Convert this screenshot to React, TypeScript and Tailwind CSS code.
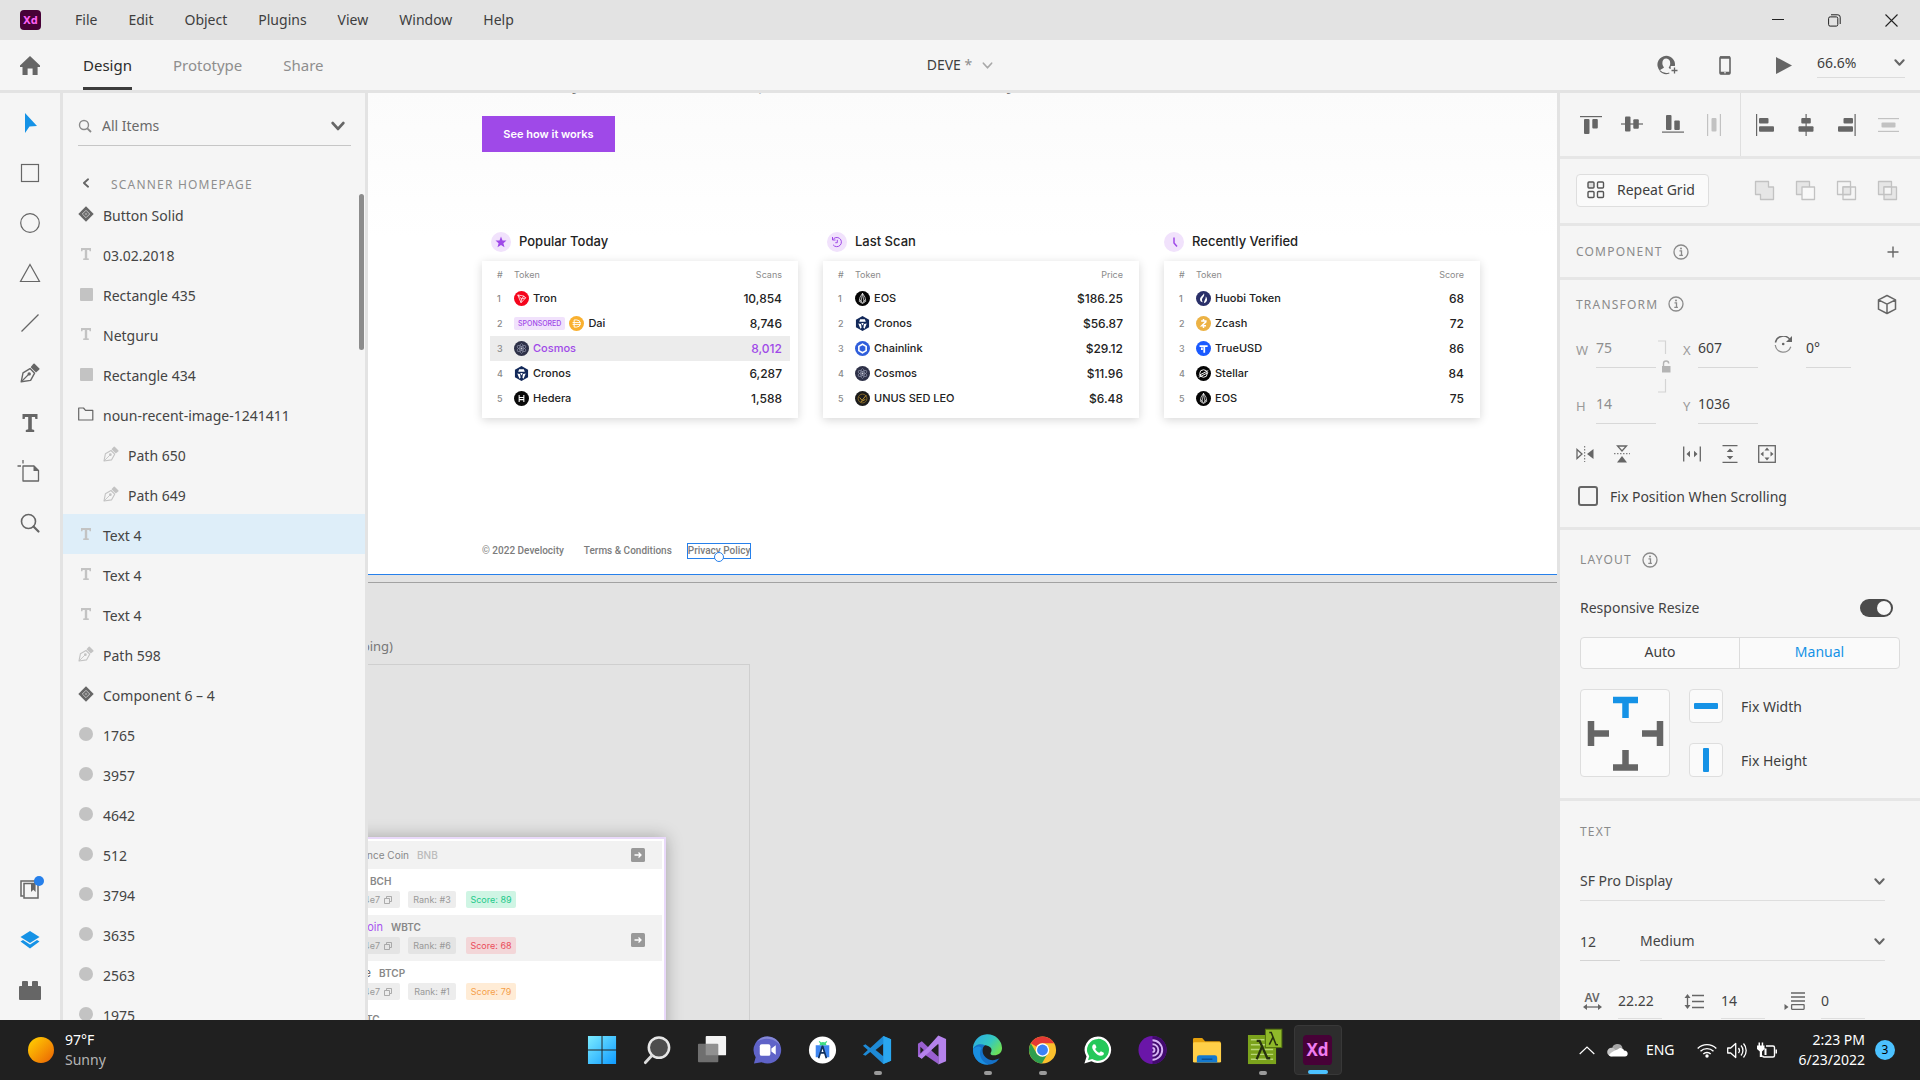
import React from "react";

type IconProps = { children: React.ReactNode; w?: number; h?: number; className?: string; box?: string };

function Icon({ children, w = 22, h = 22, className = "", box }: IconProps) {
  return (
    <svg width={w} height={h} viewBox={box ?? `0 0 ${w} ${h}`} fill="none" className={`shrink-0 ${className}`} aria-hidden="true">
      {children}
    </svg>
  );
}

const G = "#666666";

/* ---------- shared glyphs ---------- */

function Chevron({ w = 12, color = G, sw = 2.2 }: { w?: number; color?: string; sw?: number }) {
  return (
    <Icon w={w} h={w} box="0 0 12 12">
      <path d="M1.5 3.5 6 8.5l4.5-5" stroke={color} strokeWidth={sw} strokeLinejoin="round" strokeLinecap="round" />
    </Icon>
  );
}

function PenGlyph({ size = 18, color = G }: { size?: number; color?: string }) {
  return (
    <Icon w={size} h={size} box="0 0 20 20">
      <path d="M1.2 18.8 3 9.8l7-4.2 4.6 4.6-4 7.2Z" stroke={color} strokeWidth="1.4" strokeLinejoin="round" />
      <path d="m1.5 18.5 7-7" stroke={color} strokeWidth="1.1" />
      <circle cx="9.2" cy="10.9" r="1.7" fill={color} />
      <path d="m10.6 4.2 2.8-3.4 1-.2 5 5v1l-3.4 2.8Z" fill={color} />
    </Icon>
  );
}

function TextGlyph({ size = 16, color = G }: { size?: number; color?: string }) {
  return (
    <Icon w={size} h={size} box="0 0 16 18">
      <path d="M.5 0h15v5h-2.2L13 2.9H9.8v12.4l2.4.6V18H3.8v-2.1l2.4-.6V2.9H3L2.7 5H.5Z" fill={color} />
    </Icon>
  );
}

function InfoGlyph() {
  return (
    <Icon w={16} h={16}>
      <circle cx="8" cy="8" r="7" stroke="#8a8a8a" strokeWidth="1.3" />
      <path d="M6.5 6.8h2V11M6.3 11.3h3.6" stroke="#8a8a8a" strokeWidth="1.3" />
      <circle cx="8" cy="4.6" r="1" fill="#8a8a8a" />
    </Icon>
  );
}

/* ---------- title bar and toolbar ---------- */

function TitleBar() {
  const menus = ["File", "Edit", "Object", "Plugins", "View", "Window", "Help"];
  return (
    <header className="flex h-10 shrink-0 items-center bg-[#e3e3e3] pl-5 text-sm text-[#3e3e3e]">
      <span className="flex h-5 w-[21px] items-center justify-center rounded bg-[#470137] text-[11px] font-bold text-[#ff61f6]">Xd</span>
      <nav className="ml-[34px] flex gap-[31px]">
        {menus.map((m) => (
          <button key={m} type="button">{m}</button>
        ))}
      </nav>
      <div className="ml-auto flex">
        <button type="button" aria-label="Minimize" className="flex h-10 w-[57px] items-center justify-center">
          <Icon w={12} h={12}><path d="M0 5.5h12" stroke="#222" /></Icon>
        </button>
        <button type="button" aria-label="Restore" className="flex h-10 w-[57px] items-center justify-center">
          <Icon w={13} h={13}>
            <rect x=".6" y="2.9" width="9.2" height="9.2" rx="1.5" stroke="#222" />
            <path d="M3 .8h6.8a2.4 2.4 0 0 1 2.4 2.4V10" stroke="#222" />
          </Icon>
        </button>
        <button type="button" aria-label="Close" className="flex h-10 w-[57px] items-center justify-center">
          <Icon w={13} h={13}><path d="m.5.5 12 12m0-12-12 12" stroke="#222" strokeWidth="1.1" /></Icon>
        </button>
      </div>
    </header>
  );
}

function Toolbar() {
  return (
    <div className="grid h-[53px] shrink-0 grid-cols-[1fr_auto_1fr] items-stretch border-b-[3px] border-[#e3e3e3] bg-[#f5f5f5]">
      <div className="flex items-stretch pl-5">
        <button type="button" aria-label="Home">
          <Icon w={20} h={19}><path d="M10 0 20 9.6V11h-2.4v8h-5v-6.4H7.6V19H2.5v-8H0V9.6Z" fill={G} /></Icon>
        </button>
        <div className="ml-[43px] flex gap-[41px] text-[15px]">
          <button type="button" className="border-b-[3px] border-[#3c3c3c] pt-1 text-[#2c2c2c]">Design</button>
          <button type="button" className="border-b-[3px] border-transparent pt-1 text-[#8e8e8e]">Prototype</button>
          <button type="button" className="border-b-[3px] border-transparent pt-1 text-[#8e8e8e]">Share</button>
        </div>
      </div>
      <button type="button" className="flex items-center gap-2.5 text-sm text-[#3e3e3e]">
        <span>DEVE <span className="text-[#8e8e8e]">*</span></span>
        <Chevron w={11} color="#a8a8a8" sw={1.8} />
      </button>
      <div className="flex items-center justify-end pr-[15px]">
        <button type="button" aria-label="Invite" className="mr-[41px]">
          <Icon w={21} h={20}>
            <path d="M17.9 11A8.8 8.8 0 1 0 2.7 15.5C4 13.7 6.7 13.3 7 12.4c-2.8-3-2-8.8 2.3-8.8s5 5.8 2.4 8.8c0 .8 1 1.2 2 1.5V11Z" fill={G} />
            <path d="M2.8 15.5a8.8 8.8 0 0 0 9.5 2.6" stroke={G} strokeWidth="1.1" />
            <path d="M17.5 12.5v6M14.5 15.5h6" stroke={G} strokeWidth="1.3" />
          </Icon>
        </button>
        <button type="button" aria-label="Device preview" className="mr-[45px]">
          <Icon w={12} h={19}>
            <rect x="1" y="1" width="10" height="17" rx="1" stroke={G} strokeWidth="1.6" />
            <path d="M1 1.5h10M1 17h10" stroke={G} strokeWidth="2.6" />
            <circle cx="6" cy="16.8" r=".8" fill="#f5f5f5" />
          </Icon>
        </button>
        <button type="button" aria-label="Play" className="mr-[25px]">
          <Icon w={16} h={17}><path d="M0 0v17l16-8.5Z" fill={G} /></Icon>
        </button>
        <label className="relative flex w-[88px] items-center border-b border-[#dcdcdc] pb-1">
          <select aria-label="Zoom" className="w-full appearance-none bg-transparent text-sm text-[#3e3e3e]"><option>66.6%</option></select>
          <span className="pointer-events-none absolute right-0"><Chevron w={11} /></span>
        </label>
      </div>
    </div>
  );
}

/* ---------- left tool strip ---------- */

function ToolStrip() {
  const tools: { name: string; icon: React.ReactNode }[] = [
    { name: "Select", icon: <Icon><path d="M6 1v20l4.5-6.5 7.5-.6Z" fill="#1592e6" /></Icon> },
    { name: "Rectangle", icon: <Icon><rect x="2.5" y="2.5" width="17" height="17" stroke={G} strokeWidth="1.2" /></Icon> },
    { name: "Ellipse", icon: <Icon><circle cx="11" cy="11" r="9.3" stroke={G} strokeWidth="1.2" /></Icon> },
    { name: "Polygon", icon: <Icon><path d="M11 2.5 20.5 19.5h-19Z" stroke={G} strokeWidth="1.2" /></Icon> },
    { name: "Line", icon: <Icon><path d="M2.5 19.5 19.5 2.5" stroke={G} strokeWidth="1.2" /></Icon> },
    { name: "Pen", icon: <PenGlyph size={20} /> },
    { name: "Text", icon: <TextGlyph size={18} /> },
    {
      name: "Artboard",
      icon: (
        <Icon className="overflow-visible">
          <path d="M4 4h11l4.5 4.5V19H4Z" stroke={G} strokeWidth="1.3" strokeLinejoin="round" />
          <path d="M14.5 3.5V9H20Z" fill={G} />
          <path d="M4-2v3.5M-1.5 4h3.5" stroke={G} strokeWidth="1.3" />
        </Icon>
      ),
    },
    {
      name: "Zoom",
      icon: (
        <Icon>
          <circle cx="9.5" cy="9.5" r="7" stroke={G} strokeWidth="1.6" />
          <path d="m14.5 14.5 5 5" stroke={G} strokeWidth="2.2" strokeLinecap="round" />
        </Icon>
      ),
    },
  ];
  return (
    <aside className="flex w-[63px] shrink-0 flex-col items-center border-r-[3px] border-[#e3e3e3] bg-[#f5f5f5] pt-[5px]">
      {tools.map((t) => (
        <button key={t.name} type="button" aria-label={t.name} className="flex h-[50px] w-full items-center justify-center">{t.icon}</button>
      ))}
      <div className="mt-auto w-full pb-[5px]">
        <button type="button" aria-label="Libraries" className="relative flex h-[50px] w-full items-center justify-center">
          <Icon w={20} h={20}>
            <path d="M3.5 16H1V1h14v2" stroke={G} strokeWidth="1.5" />
            <rect x="4" y="3.5" width="14" height="14.5" stroke={G} strokeWidth="1.5" />
            <path d="M11 3.5v8.500l2.300-2.300 2.300 2.300V3.500Z" fill={G} />
          </Icon>
          <span className="absolute right-4 top-[11px] size-2.5 rounded-full bg-[#2680eb]" />
        </button>
        <button type="button" aria-label="Layers" className="flex h-[50px] w-full items-center justify-center">
          <Icon w={20} h={18}>
            <path d="M10 0 19.5 6 10 12 .5 6Z" fill="#1592e6" />
            <path d="m.5 10.5 2.5-1.5 7 4.500L17 9l2.500 1.500L10 17.500Z" fill="#1592e6" />
          </Icon>
        </button>
        <button type="button" aria-label="Plugins" className="flex h-[50px] w-full items-center justify-center">
          <Icon w={22} h={19}>
            <path d="M0 6a1 1 0 0 1 1-1h2V1a1 1 0 0 1 1-1h4a1 1 0 0 1 1 1v4h4V1a1 1 0 0 1 1-1h4a1 1 0 0 1 1 1v4h2a1 1 0 0 1 1 1v12a1 1 0 0 1-1 1H1a1 1 0 0 1-1-1Z" fill={G} />
          </Icon>
        </button>
      </div>
    </aside>
  );
}

/* ---------- layers panel ---------- */

type Kind = "component" | "text" | "rect" | "folder" | "path" | "dot";
type Layer = { kind: Kind; name: string; nested?: boolean; selected?: boolean };

const layers: Layer[] = [
  { kind: "component", name: "Button Solid" },
  { kind: "text", name: "03.02.2018" },
  { kind: "rect", name: "Rectangle 435" },
  { kind: "text", name: "Netguru" },
  { kind: "rect", name: "Rectangle 434" },
  { kind: "folder", name: "noun-recent-image-1241411" },
  { kind: "path", name: "Path 650", nested: true },
  { kind: "path", name: "Path 649", nested: true },
  { kind: "text", name: "Text 4", selected: true },
  { kind: "text", name: "Text 4" },
  { kind: "text", name: "Text 4" },
  { kind: "path", name: "Path 598" },
  { kind: "component", name: "Component 6 – 4" },
  { kind: "dot", name: "1765" },
  { kind: "dot", name: "3957" },
  { kind: "dot", name: "4642" },
  { kind: "dot", name: "512" },
  { kind: "dot", name: "3794" },
  { kind: "dot", name: "3635" },
  { kind: "dot", name: "2563" },
  { kind: "dot", name: "1975" },
];

function LayerIcon({ kind }: { kind: Kind }) {
  if (kind === "component")
    return (
      <Icon w={16} h={16}>
        <path d="M8 .3 15.700 8 8 15.700.3 8Z" fill={G} />
        <path d="M8 4.300 11.700 8 8 11.700 4.300 8Z" stroke="#c4c4c4" />
        <circle cx="8" cy="8" r="1.3" fill="#9a9a9a" />
      </Icon>
    );
  if (kind === "text") return <TextGlyph size={12} color="#c3c3c3" />;
  if (kind === "rect") return <span className="size-[13px] rounded-[1px] bg-[#c3c3c3]" />;
  if (kind === "folder")
    return (
      <Icon w={16} h={14}>
        <path d="M.7 13V1h4.800l2 2.400h7.300V13Z" stroke={G} strokeWidth="1.2" strokeLinejoin="round" />
      </Icon>
    );
  if (kind === "path") return <PenGlyph size={16} color="#c3c3c3" />;
  return <span className="size-3.5 rounded-full bg-[#c3c3c3]" />;
}

function LayersPanel() {
  return (
    <aside className="relative flex w-[305px] shrink-0 flex-col overflow-hidden border-r-[3px] border-[#e3e3e3] bg-[#f5f5f5]">
      <label className="ml-[15px] mr-3.5 mt-[13px] flex h-10 shrink-0 items-center border-b border-[#c6c6c6]">
        <Icon w={14} h={14}>
          <circle cx="6" cy="6" r="4.5" stroke="#8a8a8a" strokeWidth="1.4" />
          <path d="m9.300 9.300 3.700 3.700" stroke="#8a8a8a" strokeWidth="1.8" />
        </Icon>
        <input aria-label="Filter layers" defaultValue="All Items" className="ml-2.5 w-0 flex-1 bg-transparent text-sm text-[#6a6a6a] outline-none" />
        <span className="mr-1.5"><Chevron w={14} sw={2.4} /></span>
      </label>
      <div className="mt-[26px] flex h-[22px] shrink-0 items-center pl-[18px] text-xs tracking-widest text-[#8e8e8e]">
        <span className="mr-5 rotate-90"><Chevron w={10} /></span>
        <span className="pt-1">SCANNER HOMEPAGE</span>
      </div>
      <ul className="text-sm text-[#444]">
        {layers.map((l, i) => (
          <li key={i} className={`flex h-10 items-center ${l.nested ? "pl-10" : "pl-[15px]"} ${l.selected ? "bg-[#deeef9]" : ""}`}>
            <span className="flex w-4 shrink-0 justify-center"><LayerIcon kind={l.kind} /></span>
            <span className="ml-[9px] pt-1">{l.name}</span>
          </li>
        ))}
      </ul>
      <span className="absolute right-px top-[101px] h-[156px] w-[5px] rounded-full bg-[#8c8c8c]" />
    </aside>
  );
}

/* ---------- token logos ---------- */

function Coin({ name }: { name: string }) {
  const s = "#ffffff";
  const art: Record<string, React.ReactNode> = {
    Tron: <><circle cx="8" cy="8" r="8" fill="#f5051c" /><path d="M4 4.200 10.500 5.400 12.500 7.200 7.500 12.500ZM4 4.200l4 4.300 4.500-1.300M8 8.500l-.5 4M8 8.500l2.500-3.100" stroke={s} strokeWidth=".8" strokeLinejoin="round" /></>,
    Dai: <><circle cx="8" cy="8" r="8" fill="#f9b02f" /><path d="M5.500 4.200h2.700a3.800 3.800 0 0 1 0 7.600H5.500ZM3.800 7h8.600M3.800 9h8.600" stroke={s} strokeWidth="1" /></>,
    Cosmos: <><circle cx="8" cy="8" r="8" fill="#2e3148" /><g stroke="#8d91a8" strokeWidth=".7"><ellipse cx="8" cy="8" rx="1.9" ry="5.3" /><ellipse cx="8" cy="8" rx="1.9" ry="5.3" transform="rotate(60 8 8)" /><ellipse cx="8" cy="8" rx="1.9" ry="5.3" transform="rotate(120 8 8)" /></g><circle cx="8" cy="8" r="1" fill="#d0d2df" /></>,
    Cronos: <><path d="m8 0 7 4v8l-7 4-7-4V4Z" fill="#13295a" /><path d="M5.500 3.500h5l1 2.700h-7ZM3.500 8l3 .5.5 4-1.200 1ZM12.500 8l-3 .5-.5 4 1.200 1ZM6.700 7.500h2.600L8 10Z" fill={s} /></>,
    Hedera: <><circle cx="8" cy="8" r="8" fill="#0a0a0a" /><path d="M5.500 4.300v7.400M10.500 4.300v7.400M5.500 7h5M5.500 9.200h5" stroke={s} strokeWidth="1.1" /></>,
    EOS: <><circle cx="8" cy="8" r="8" fill="#050505" /><path d="m8 2.500-2.600 4L4.500 11 8 13.300l3.500-2.300-.9-4.500ZM8 2.500 6.300 12M8 2.500 9.700 12M5 9l3 4 3-4" stroke={s} strokeWidth=".7" strokeLinejoin="round" /></>,
    Chainlink: <><circle cx="8" cy="8" r="8" fill="#2f5edb" /><path d="m8 3.500 3.900 2.200v4.600L8 12.500l-3.900-2.200V5.700Z" stroke={s} strokeWidth="1.7" /></>,
    "UNUS SED LEO": <><circle cx="8" cy="8" r="8" fill="#1c1c1c" /><circle cx="8" cy="8" r="4.7" stroke="#8a6a25" strokeWidth="1" /><path d="m5 7 2.500 3L12 4.500M6 11.500l5-2.500" stroke="#c69a34" strokeWidth="1" /></>,
    "Huobi Token": <><circle cx="8" cy="8" r="8" fill="#2a3069" /><path d="M8.500 2.500c1 2.500-.5 3.700-1.500 5s-.8 3 .3 4.500C4 11.500 3.500 8 5.500 6s2.500-2 3-3.500Z" fill={s} /><path d="M10.500 5.500c.8 1.600 2 3 .9 5.200-.6 1.200-1.700 2-3 2.300 0-2.500 2.100-4 2.100-7.500Z" fill={s} /></>,
    Zcash: <><circle cx="8" cy="8" r="8" fill="#ecb244" /><path d="M5.500 5.300h5v1l-4.300 4h4.500M8 3.300v2M8 10.500v2.200" stroke={s} strokeWidth="1.6" /></>,
    TrueUSD: <><circle cx="8" cy="8" r="8" fill="#1a5aff" /><path d="M3.800 5.500h8.600M8.800 5.500v7M6.300 7v2.500" stroke={s} strokeWidth="1.9" /></>,
    Stellar: <><circle cx="8" cy="8" r="8" fill="#050505" /><circle cx="8" cy="8" r="4" stroke={s} strokeWidth="1" /><path d="m3 10 10-5M3 12l10-5" stroke={s} strokeWidth="1" /></>,
  };
  return <Icon w={15} h={15} box="0 0 16 16">{art[name]}</Icon>;
}

/* ---------- canvas ---------- */

type Row = { name: string; value: string; sponsored?: boolean; active?: boolean };
type Board = { title: string; column: string; icon: React.ReactNode; pad: string; rows: Row[] };

const boards: Board[] = [
  {
    title: "Popular Today",
    column: "Scans",
    pad: "pl-[9px]",
    icon: <path d="m10 4.500 1.500 3.900 4 .2-3.100 2.600 1.100 4-3.500-2.300-3.500 2.300 1.100-4-3.100-2.600 4-.2Z" fill="#9f49e8" />,
    rows: [
      { name: "Tron", value: "10,854" },
      { name: "Dai", value: "8,746", sponsored: true },
      { name: "Cosmos", value: "8,012", active: true },
      { name: "Cronos", value: "6,287" },
      { name: "Hedera", value: "1,588" },
    ],
  },
  {
    title: "Last Scan",
    column: "Price",
    pad: "pl-1",
    icon: <path d="M5.500 5v3h3M5.800 7.800a4.600 4.600 0 1 1 .3 5M10.300 7.800v2.900H8.300" stroke="#9f49e8" strokeWidth="1" />,
    rows: [
      { name: "EOS", value: "$186.25" },
      { name: "Cronos", value: "$56.87" },
      { name: "Chainlink", value: "$29.12" },
      { name: "Cosmos", value: "$11.96" },
      { name: "UNUS SED LEO", value: "$6.48" },
    ],
  },
  {
    title: "Recently Verified",
    column: "Score",
    pad: "pl-0",
    icon: <path d="M10 5.500V11l3 3.500" stroke="#9f49e8" strokeWidth="1.5" />,
    rows: [
      { name: "Huobi Token", value: "68" },
      { name: "Zcash", value: "72" },
      { name: "TrueUSD", value: "86" },
      { name: "Stellar", value: "84" },
      { name: "EOS", value: "75" },
    ],
  },
];

function TokenBoard({ board }: { board: Board }) {
  return (
    <section className="w-[316px]">
      <h2 className={`flex h-10 items-center gap-2 pt-0.5 text-[13px] font-medium text-[#222] ${board.pad}`}>
        <span className="size-5 rounded-full bg-[#f1e2fc]"><Icon w={20} h={20}>{board.icon}</Icon></span>
        {board.title}
      </h2>
      <div className="bg-white px-2 pb-[7px] shadow-[0_2px_9px_rgba(0,0,0,0.16)]">
        <table className="w-full border-collapse text-[11px] font-medium text-[#222]">
          <thead>
            <tr className="h-[25px] text-left text-[9px] text-[#8a8a8a]">
              <th className="w-6 pl-[7px] pt-0.5 font-normal">#</th>
              <th className="pt-0.5 font-normal">Token</th>
              <th className="pr-2 pt-0.5 text-right font-normal">{board.column}</th>
            </tr>
          </thead>
          <tbody>
            {board.rows.map((r, i) => (
              <tr key={r.name} className={`h-[25px] ${r.active ? "bg-[#ececec] text-[#9f49e8]" : ""}`}>
                <td className="pl-[7px] text-[9px] text-[#8a8a8a]">{i + 1}</td>
                <td>
                  <span className="flex items-center">
                    {r.sponsored && <span className="mr-1 rounded-xs bg-[#f1e2fc] px-1 text-[7px] leading-[13px] text-[#9f49e8]">SPONSORED</span>}
                    <Coin name={r.name} />
                    <span className="ml-1">{r.name}</span>
                  </span>
                </td>
                <td className="pr-2 text-right text-xs">{r.value}</td>
              </tr>
            ))}
          </tbody>
        </table>
      </div>
    </section>
  );
}

function ArrowBadge() {
  return (
    <Icon w={14} h={14}>
      <rect width="14" height="14" rx="1.5" fill="#999" />
      <path d="M3.500 7h6M7.500 4.500 10 7 7.500 9.500" stroke="#fff" strokeWidth="1.3" />
    </Icon>
  );
}

type CoinLine = { name: string; nameClass: string; ticker: string; rank: string; score: string; tone: string; shade?: boolean };

const coinLines: CoinLine[] = [
  { name: "Bitcoin Cash", nameClass: "w-[92px] text-[#555]", ticker: "BCH", rank: "Rank: #3", score: "Score: 89", tone: "bg-[#cff5e4] text-[#22c98a]" },
  { name: "Wrapped Bitcoin", nameClass: "w-[113px] text-[#a855f0]", ticker: "WBTC", rank: "Rank: #6", score: "Score: 68", tone: "bg-[#f3d6d8] text-[#ea4c5a]", shade: true },
  { name: "Bitcoin Private", nameClass: "w-[101px] text-[#555]", ticker: "BTCP", rank: "Rank: #1", score: "Score: 79", tone: "bg-[#ffecd6] text-[#f5a04a]" },
  { name: "Bitcoin", nameClass: "w-[82px] text-[#555]", ticker: "BTC", rank: "Rank: #2", score: "Score: 81", tone: "bg-[#cff5e4] text-[#22c98a]" },
];

function SearchResults() {
  return (
    <div className="absolute -left-[102px] top-[744px] w-[400px] border-2 border-[#e9d9fa] bg-white px-0.5 pt-0.5 text-[11px] shadow-[0_0_16px_rgba(0,0,0,0.28)]">
      <div className="flex h-7 items-center bg-[#f2f2f2] pr-[17px] text-[10px] text-[#888]">
        <span className="w-[139px] whitespace-nowrap text-right">Binance Coin</span>
        <span className="ml-2 mr-auto font-medium text-[#bbb]">BNB</span>
        <ArrowBadge />
      </div>
      {coinLines.map((c) => (
        <div key={c.name} className={`flex h-[46px] items-start pr-[17px] pt-1 ${c.shade ? "bg-[#f2f2f2]" : ""}`}>
          <div className="mr-auto">
            <div className="flex leading-4">
              <span className={`shrink-0 whitespace-nowrap text-right ${c.nameClass}`}>{c.name}</span>
              <span className="ml-2 text-[10px] font-semibold text-[#888]">{c.ticker}</span>
            </div>
            <div className="mt-0.5 flex text-[9px] leading-[17px] text-[#999]">
              <span className={`flex w-[130px] items-center justify-end gap-1 rounded-xs pr-2 ${c.shade ? "bg-[#e4e4e4]" : "bg-[#ededed]"}`}>
                0x5a8c4e7
                <Icon w={8} h={8}><path d="M.5 2.500h5v5h-5ZM2.500 2V.5h5v5H6" stroke="#999" strokeWidth=".8" /></Icon>
              </span>
              <span className={`ml-2 w-12 rounded-xs text-center ${c.shade ? "bg-[#e4e4e4]" : "bg-[#ededed]"}`}>{c.rank}</span>
              <span className={`ml-2.5 w-[50px] rounded-xs text-center ${c.tone}`}>{c.score}</span>
            </div>
          </div>
          {c.shade && <span className="self-center"><ArrowBadge /></span>}
        </div>
      ))}
    </div>
  );
}

function Canvas() {
  return (
    <main className="relative min-w-0 flex-1 overflow-hidden bg-[#e3e3e3] font-['Inter',sans-serif]">
      <div className="flex h-[482px] flex-col items-start border-b border-[#2680eb] bg-gradient-to-b from-[#fbfbfb] to-white to-30% pl-[114px]">
        <p className="-mt-5 h-[43px] shrink-0 whitespace-nowrap text-xl leading-5 text-[#777]">Check any token for the risks, audits and liabilities it may hold</p>
        <button type="button" className="h-9 w-[133px] shrink-0 bg-[#9f49e8] text-[11px] font-semibold text-white">See how it works</button>
        <div className="mt-[69px] flex gap-[25px]">
          {boards.map((b) => <TokenBoard key={b.title} board={b} />)}
        </div>
        <footer className="mt-[126px] flex items-center font-['Roboto',sans-serif] text-[10px] font-medium leading-[14px] text-[#7c7c7c]">
          <span>© 2022 Develocity</span>
          <a href="#terms" className="ml-5">Terms &amp; Conditions</a>
          <a href="#privacy" className="relative ml-4 outline-1 outline-[#2680eb]">
            Privacy Policy
            <span className="absolute left-1/2 top-2 size-2.5 -translate-x-1/2 rounded-full border border-[#2680eb] bg-white" />
          </a>
        </footer>
      </div>
      <div className="h-2 border-b border-[#a2a2a2]" />
      <div className="absolute -left-[220px] top-[545px] w-[245px] whitespace-nowrap text-right font-['Noto_Sans',sans-serif] text-[13px] leading-4 text-[#777]">Search results (typing)</div>
      <div className="absolute -left-5 top-[571px] h-[600px] w-[402px] border border-[#cfcfcf]" />
      <SearchResults />
    </main>
  );
}

/* ---------- inspector ---------- */

function Bars({ children, faint = false }: { children: React.ReactNode; faint?: boolean }) {
  return (
    <Icon className={faint ? "text-[#c2c2c2]" : "text-[#666]"}>
      <g fill="currentColor">{children}</g>
    </Icon>
  );
}

function AlignRow() {
  const vertical = [
    <Bars><rect x="0" y="2" width="22" height="1.2" /><rect x="4" y="5" width="5.5" height="15" rx="1" /><rect x="12.3" y="5" width="5.5" height="9.5" rx="1" /></Bars>,
    <Bars><rect x="0" y="9.4" width="22" height="1.2" /><rect x="4" y="2.5" width="5.5" height="15" rx="1" /><rect x="12.3" y="5.3" width="5.5" height="9.5" rx="1" /></Bars>,
    <Bars><rect x="0" y="17.5" width="22" height="1.2" /><rect x="4" y="1" width="5.5" height="15" rx="1" /><rect x="12.3" y="6.5" width="5.5" height="9.5" rx="1" /></Bars>,
    <Bars faint><rect x="4" y="0" width="1.2" height="22" /><rect x="16.8" y="0" width="1.2" height="22" /><rect x="8.5" y="4" width="5" height="13.5" rx="1" /></Bars>,
  ];
  const horizontal = [
    <Bars><rect x="1" y="0" width="1.2" height="22" /><rect x="4" y="4" width="9.5" height="5.5" rx="1" /><rect x="4" y="12.3" width="15" height="5.5" rx="1" /></Bars>,
    <Bars><rect x="9.5" y="0" width="1.2" height="22" /><rect x="5.3" y="4" width="9.5" height="5.5" rx="1" /><rect x="2.5" y="12.3" width="15" height="5.5" rx="1" /></Bars>,
    <Bars><rect x="17.5" y="0" width="1.2" height="22" /><rect x="6.5" y="4" width="9.5" height="5.5" rx="1" /><rect x="1" y="12.3" width="15" height="5.5" rx="1" /></Bars>,
    <Bars faint><rect x="0" y="4" width="21" height="1.2" /><rect x="0" y="16.8" width="21" height="1.2" /><rect x="3.5" y="8.5" width="14" height="5" rx="1" /></Bars>,
  ];
  const vNames = ["Align top", "Align middle", "Align bottom", "Distribute horizontally"];
  const hNames = ["Align left", "Align center", "Align right", "Distribute vertically"];
  return (
    <div className="flex h-[66px] shrink-0 border-b-[3px] border-[#e6e6e6]">
      <div className="flex w-[181px] border-r border-[#dfdfdf] pl-2.5">
        {vertical.map((v, i) => <button key={i} type="button" aria-label={vNames[i]} className="flex w-[41px] items-center justify-center">{v}</button>)}
      </div>
      <div className="flex pl-1">
        {horizontal.map((v, i) => <button key={i} type="button" aria-label={hNames[i]} className="flex w-[41px] items-center justify-center">{v}</button>)}
      </div>
    </div>
  );
}

function RepeatRow() {
  const fill = "#e6e6e6";
  const ops = [
    { n: "Add", a: <path d="M1.500 1.500h13v5.500h5v12.500h-13v-5h-5Z" fill={fill} /> },
    { n: "Subtract", a: <><path d="M1.500 1.500h13v13h-13Z" fill={fill} /><rect x="7" y="7" width="12.5" height="12.5" fill="#f8f8f8" /></> },
    { n: "Intersect", a: <><rect x="1.5" y="1.5" width="13" height="13" /><rect x="7" y="7" width="12.5" height="12.5" /><rect x="7" y="7" width="7.5" height="7.5" fill={fill} /></> },
    { n: "Exclude", a: <><rect x="1.5" y="1.5" width="13" height="13" fill={fill} /><rect x="7" y="7" width="12.5" height="12.5" fill={fill} /><rect x="7" y="7" width="7.5" height="7.5" fill="#f5f5f5" /></> },
  ];
  return (
    <div className="flex h-[67px] shrink-0 items-center border-b-[3px] border-[#e6e6e6] pb-0.5 pl-4">
      <button type="button" className="flex h-[33px] w-[133px] items-center rounded border border-[#dedede] bg-[#fafafa] pl-2.5 text-sm text-[#3e3e3e]">
        <Icon w={18} h={18}>
          <g stroke="#555" strokeWidth="1.4">
            <rect x="1" y="1" width="6" height="6" rx="1" fill="#ddd" /><rect x="10.5" y="1" width="6" height="6" rx="1" />
            <rect x="1" y="10.5" width="6" height="6" rx="1" /><rect x="10.5" y="10.5" width="6" height="6" rx="1" />
          </g>
        </Icon>
        <span className="ml-3">Repeat Grid</span>
      </button>
      <div className="ml-auto flex pr-3">
        {ops.map((o) => (
          <button key={o.n} type="button" aria-label={o.n} className="flex w-[41px] justify-center">
            <Icon w={21} h={21}><g stroke="#c2c2c2" strokeWidth="1.3" strokeLinejoin="round">{o.a}</g></Icon>
          </button>
        ))}
      </div>
    </div>
  );
}

function SectionTitle({ children, info = true }: { children: React.ReactNode; info?: boolean }) {
  return (
    <span className="flex items-center gap-2.5">
      <h3 className="pt-px text-xs leading-6 tracking-widest text-[#8a8a8a]">{children}</h3>
      {info && <InfoGlyph />}
    </span>
  );
}

type FieldProps = { label: string; value: string; muted?: boolean; width?: string; labelWidth?: string };

function Field({ label, value, muted = false, width = "w-[60px]", labelWidth = "w-5" }: FieldProps) {
  return (
    <label className="flex items-start">
      <span className={`pt-1 text-[13px] leading-5 text-[#9a9a9a] ${labelWidth}`}>{label}</span>
      <input
        aria-label={label || "Rotation"}
        defaultValue={value}
        className={`h-8 border-b border-[#d8d8d8] bg-transparent pb-2 text-sm outline-none ${width} ${muted ? "text-[#8e8e8e]" : "text-[#3e3e3e]"}`}
      />
    </label>
  );
}

function TransformSection() {
  const flips = [
    { n: "Flip horizontal", c: "mr-[19px]", a: <><path d="M1 4.500v9l5-4.500Z" stroke={G} strokeWidth="1.3" /><path d="M17.500 4v10L11 9Z" fill={G} /><path d="M8.700 1v16" stroke={G} strokeDasharray="1.5 1.5" /></> },
    { n: "Flip vertical", c: "mr-[52px]", a: <><path d="M4.500 1h9L9 6Z" stroke={G} strokeWidth="1.3" /><path d="M4 17.500h10L9 11Z" fill={G} /><path d="M1 8.700h16" stroke={G} strokeDasharray="1.5 1.5" /></> },
    { n: "Responsive width", c: "mr-[20px]", a: <><path d="M.7 1.500v15M17.300 1.500v15" stroke={G} strokeWidth="1.3" /><path d="M3.500 9 7 5.700v6.600ZM14.500 9 11 5.700v6.600Z" fill={G} /></> },
    { n: "Responsive height", c: "mr-[19px]", a: <><path d="M1.500.7h15M1.500 17.300h15" stroke={G} strokeWidth="1.3" /><path d="M9 3.500 5.700 7h6.600ZM9 14.500 5.700 11h6.600Z" fill={G} /></> },
    { n: "Fit", c: "", a: <><rect x=".7" y=".7" width="16.6" height="16.6" stroke={G} strokeWidth="1.3" /><path d="M9 2.500 6.500 5.500h5ZM9 15.500l-2.500-3h5ZM2.500 9l3-2.500v5ZM15.500 9l-3-2.500v5Z" fill={G} /></> },
  ];
  return (
    <div className="h-[250px] shrink-0 border-b-[3px] border-[#e6e6e6] pl-4 pt-2.5">
      <div className="flex h-7 items-center pr-[23px]">
        <SectionTitle>TRANSFORM</SectionTitle>
        <button type="button" aria-label="3D transform" className="ml-auto">
          <Icon w={20} h={21}>
            <path d="m10 1.500 8.500 4.300v9.400L10 19.500l-8.500-4.300V5.800ZM1.500 5.800 10 10.200l8.500-4.400M10 10.200v9.300" stroke={G} strokeWidth="1.5" strokeLinejoin="round" />
          </Icon>
        </button>
      </div>
      <div className="mt-[18px] flex">
        <div className="flex flex-col gap-6">
          <Field label="W" value="75" muted />
          <Field label="H" value="14" muted />
        </div>
        <Icon w={13} h={54} className="ml-0.5 mt-1">
          <path d="M0 1h7.500v13M0 52h7.500V39" stroke="#d4d4d4" strokeWidth="1.2" />
          <path d="M4 26h8.500v6.500H4Z" fill="#b4b4b4" />
          <path d="M5.500 26v-2.500c0-3.300 5.200-3.300 5.200 0" stroke="#b4b4b4" strokeWidth="1.4" />
        </Icon>
        <div className="ml-3 flex flex-col gap-6">
          <Field label="X" value="607" labelWidth="w-[15px]" />
          <Field label="Y" value="1036" labelWidth="w-[15px]" />
        </div>
        <div className="ml-4 flex items-start">
          <Icon w={20} h={20}>
            <path d="M1.300 9a8 8 0 0 0 15.500 1.800" stroke="#8e8e8e" strokeWidth="1.3" />
            <path d="M1.400 6.500a8 8 0 0 1 14.800-2.300" stroke={G} strokeWidth="1.5" />
            <path d="M18 0v6h-6Z" fill={G} />
            <circle cx="9.2" cy="8" r="1.3" fill={G} />
          </Icon>
          <Field label="" value="0°" width="w-[45px]" labelWidth="w-3" />
        </div>
      </div>
      <div className="mt-[21px] flex items-center">
        {flips.map((f) => (
          <button key={f.n} type="button" aria-label={f.n} className={f.c}><Icon w={18} h={18}>{f.a}</Icon></button>
        ))}
      </div>
      <label className="mt-[22px] flex items-center text-sm text-[#3e3e3e]">
        <input type="checkbox" className="ml-0.5 size-5 appearance-none rounded-[3px] border-2 border-[#666]" />
        <span className="ml-3 pt-0.5">Fix Position When Scrolling</span>
      </label>
    </div>
  );
}

function LayoutSection() {
  return (
    <div className="h-[271px] shrink-0 border-b-[3px] border-[#e6e6e6] pl-5 pr-5 pt-[17px]">
      <SectionTitle>LAYOUT</SectionTitle>
      <label className="mt-6 flex h-6 items-center justify-between pr-[7px] text-sm text-[#444]">
        Responsive Resize
        <span className="relative h-[18px] w-[33px]">
          <input type="checkbox" role="switch" defaultChecked className="block h-full w-full appearance-none rounded-full bg-[#4b4b4b]" />
          <span className="pointer-events-none absolute right-0.5 top-0.5 size-3.5 rounded-full bg-[#f8f8f8]" />
        </span>
      </label>
      <div className="mt-[17px] grid h-8 grid-cols-2 rounded-sm border border-[#dcdcdc] bg-[#fafafa] text-sm">
        <button type="button" className="border-r border-[#dcdcdc] pb-0.5 text-[#3e3e3e]">Auto</button>
        <button type="button" className="pb-0.5 text-[#1592e6]">Manual</button>
      </div>
      <div className="mt-5 flex">
        <div className="h-[88px] w-[90px] rounded-sm border border-[#dedede] bg-[#fafafa]">
          <Icon w={88} h={86}>
            <g strokeLinejoin="round">
              <path d="M32 10h25M44.500 10v18" stroke="#1592e6" strokeWidth="6.5" />
              <path d="M32 77.500h25M44.500 77V60M10 31v25M10 43.500h18M79 31v25M79 43.500H61" stroke={G} strokeWidth="6.5" />
            </g>
          </Icon>
        </div>
        <div className="ml-[19px] flex flex-col justify-between text-sm text-[#3e3e3e]">
          <button type="button" className="flex items-center gap-[18px]">
            <span className="flex size-[34px] items-center justify-center rounded border border-[#dedede] bg-[#fafafa]"><span className="h-1.5 w-6 rounded-[1px] bg-[#1592e6]" /></span>
            <span className="pt-0.5">Fix Width</span>
          </button>
          <button type="button" className="flex items-center gap-[18px]">
            <span className="flex size-[34px] items-center justify-center rounded border border-[#dedede] bg-[#fafafa]"><span className="h-6 w-1.5 rounded-[1px] bg-[#1592e6]" /></span>
            <span className="pt-0.5">Fix Height</span>
          </button>
        </div>
      </div>
    </div>
  );
}

function TextSection() {
  return (
    <div className="pl-5 pt-[18px] text-sm text-[#444]">
      <SectionTitle info={false}>TEXT</SectionTitle>
      <label className="relative mr-[35px] mt-[18px] flex h-[39px] items-center border-b border-[#dedede]">
        <select aria-label="Font family" className="w-full appearance-none bg-transparent"><option>SF Pro Display</option></select>
        <span className="pointer-events-none absolute right-0"><Chevron w={11} /></span>
      </label>
      <div className="mr-[35px] mt-[21px] flex gap-5">
        <input aria-label="Font size" defaultValue="12" className="h-[39px] w-10 border-b border-[#d4d4d4] bg-transparent outline-none" />
        <label className="relative flex h-[39px] flex-1 items-center border-b border-[#dedede]">
          <select aria-label="Font weight" className="w-full appearance-none bg-transparent"><option>Medium</option></select>
          <span className="pointer-events-none absolute right-0"><Chevron w={11} /></span>
        </label>
      </div>
      <div className="mt-[22px] flex items-start">
        <label className="flex w-[104px] items-center">
          <span className="ml-0.5 flex w-5 flex-col items-center text-[12px] font-semibold leading-3 text-[#666]">
            AV
            <Icon w={19} h={6}><path d="M2 3h15" stroke={G} strokeWidth="1.3" /><path d="m0 3 4-3v6ZM19 3l-4-3v6Z" fill={G} /></Icon>
          </span>
          <input aria-label="Character spacing" defaultValue="22.22" className="ml-4 h-9 w-11 border-b border-[#dedede] bg-transparent outline-none" />
        </label>
        <label className="flex w-[100px] items-center">
          <Icon w={20} h={15}>
            <path d="M3.500 2v11M8 1.500h12M8 7.500h12M8 13.500h12" stroke={G} strokeWidth="1.3" />
            <path d="M3.500 0 6.500 4h-6ZM3.500 15l3-4h-6Z" fill={G} />
          </Icon>
          <input aria-label="Line spacing" defaultValue="14" className="ml-[17px] h-9 w-11 border-b border-[#dedede] bg-transparent outline-none" />
        </label>
        <label className="flex items-center">
          <Icon w={21} h={18}>
            <path d="M7 1h14M7 5h14M7 9h14" stroke={G} strokeWidth="1.3" />
            <rect x="7.6" y="12.6" width="12.5" height="4.7" rx=".5" stroke={G} strokeWidth="1.3" />
            <path d="m.5 12 4 3-4 3Z" fill={G} />
          </Icon>
          <input aria-label="Paragraph spacing" defaultValue="0" className="ml-4 h-9 w-11 border-b border-[#dedede] bg-transparent outline-none" />
        </label>
      </div>
    </div>
  );
}

function Inspector() {
  return (
    <aside className="flex w-[363px] shrink-0 flex-col overflow-hidden border-l-[3px] border-[#e3e3e3] bg-[#f5f5f5]">
      <AlignRow />
      <RepeatRow />
      <div className="flex h-[54px] shrink-0 items-center border-b-[3px] border-[#e6e6e6] pl-4 pr-[21px]">
        <SectionTitle>COMPONENT</SectionTitle>
        <button type="button" aria-label="Add component" className="ml-auto"><Icon w={12} h={12}><path d="M6 .5v11M.5 6h11" stroke={G} strokeWidth="1.4" /></Icon></button>
      </div>
      <TransformSection />
      <LayoutSection />
      <TextSection />
    </aside>
  );
}

/* ---------- taskbar ---------- */

function Taskbar() {
  const apps: { name: string; dot?: boolean; active?: boolean; icon: React.ReactNode }[] = [
    {
      name: "Start",
      icon: (
        <>
          <defs><linearGradient id="win" x1="0" y1="0" x2="1" y2="1"><stop stopColor="#7cecff" /><stop offset="1" stopColor="#0f9bff" /></linearGradient></defs>
          <path d="M1 1h14v14H1ZM16 1h14v14H16ZM1 16h14v14H1ZM16 16h14v14H16Z" fill="url(#win)" />
        </>
      ),
    },
    { name: "Search", icon: <><circle cx="17.5" cy="13" r="10.5" fill="#4d4d4d" stroke="#e6e6e6" strokeWidth="2.6" /><path d="m10 21.500-6.500 7" stroke="#dcdcdc" strokeWidth="3" strokeLinecap="round" /></> },
    { name: "Task view", icon: <><rect x="9" y="1" width="21" height="20" rx="1" fill="#f3f3f3" /><rect x="1" y="9" width="21" height="19" rx="1" fill="#7e7e7e" fillOpacity=".85" /></> },
    {
      name: "Teams chat",
      icon: (
        <>
          <path d="M16 1.500a14 14 0 1 1-6 26.600L2 29.500l1.800-6.600A14 14 0 0 1 16 1.500Z" fill="#5f63c8" />
          <path d="M16 1.500a14 14 0 0 1 13.300 9.500A18 18 0 0 0 5 7 14 14 0 0 1 16 1.500Z" fill="#8689d6" />
          <rect x="8" y="9.5" width="11" height="12" rx="2" fill="#fff" /><path d="m20 14 4.500-3.500v10L20 17Z" fill="#fff" />
        </>
      ),
    },
    {
      name: "Android Studio",
      icon: (
        <>
          <circle cx="16" cy="15.5" r="14" fill="#fff" />
          <path d="M9 10.500h14v12.500h-3.500L16 14l-3.500 9H9Z" fill="#3f86f0" />
          <path d="M13 10.500c0-4.500 7-4.500 7 0Z" fill="#3ddc84" /><path d="m12.500 6.500 2 2M20.500 6.500l-2 2" stroke="#3ddc84" strokeWidth="1.2" />
          <path d="m16 11-4 13M16 11l4 13M13 18.500h6" stroke="#12305c" strokeWidth="1.7" />
        </>
      ),
    },
    {
      name: "Visual Studio Code",
      dot: true,
      icon: (
        <>
          <path d="M22 1 30 4.500v22L22 30 8.500 17.500 3.500 21.500 1 20l5-4.500L1 11l2.500-1.500 5 4Z" fill="#1e8ad6" />
          <path d="M22 9v13l-8-6.500Z" fill="#202020" /><path d="m22 1 8 3.500v22L22 30Z" fill="#2aa7f0" />
        </>
      ),
    },
    {
      name: "Visual Studio",
      icon: (
        <>
          <path d="m1 9 4-2.500 17 16V30L7 19.500 5 24.500 1 22Z" fill="#9a5fd0" /><path d="M22 .5 30 4v23l-8 3.500V9L5 24.500 1 22l9-8Z" fill="#b583ec" />
          <path d="M22 10v12l-7-6Z" fill="#202020" /><path d="M3.500 12v7l3.500-3.500Z" fill="#202020" />
        </>
      ),
    },
    {
      name: "Edge",
      dot: true,
      icon: (
        <>
          <defs><linearGradient id="edge" x1="0" y1="0" x2="1" y2=".6"><stop stopColor="#2aa8e8" /><stop offset=".6" stopColor="#35c8c0" /><stop offset="1" stopColor="#6be05a" /></linearGradient></defs>
          <path d="M1 15A15 15 0 0 1 31 13.500c0 5-4 7.500-8 7.500-5 0-4-2.200-3-4.200C21.500 12 14 9 8 11.500c-3 1.200-5.500 2.500-7 3.500Z" fill="url(#edge)" />
          <path d="M1 15c1-5 8-7 12.500-4.500C10 13 10 19 14 23s10 3.500 14.500 1A15 15 0 0 1 1 15Z" fill="#1572c8" />
          <path d="M10 13.500C6 19 9 27.500 17 30.500 7 31.500 1 23 1 15c3-4 7-4 9-1.500Z" fill="#1a8fe0" />
        </>
      ),
    },
    {
      name: "Chrome",
      dot: true,
      icon: (
        <>
          <circle cx="16" cy="15.5" r="14" fill="#fbc02d" />
          <path d="M3.900 8.500a14 14 0 0 1 24.200 0H16a7 7 0 0 0-6 3.500Z" fill="#e53935" /><path d="M3.900 8.500a14 14 0 0 0 11.500 21l5.800-10.200A7 7 0 0 1 10 19Z" fill="#2e9e4f" />
          <circle cx="16" cy="15.5" r="7" fill="#fff" /><circle cx="16" cy="15.5" r="5.6" fill="#3b82f6" />
        </>
      ),
    },
    {
      name: "WhatsApp",
      icon: (
        <>
          <path d="M16.500 1.500a13.700 13.700 0 1 1-6.700 25.700L2.500 29.500l2.200-7.300A13.700 13.700 0 0 1 16.500 1.500Z" fill="#fff" />
          <path d="M16.500 4a11.300 11.300 0 1 1-6 20.800l-4.300 1.200 1.200-4.100A11.300 11.300 0 0 1 16.500 4Z" fill="#25c85a" />
          <path d="M12 9.500c-2 1.500-2 3.700 0 6.800s5 5.200 7.500 5.200c2 0 3.500-1.500 3-3.200l-3-1.600-1.600 1.700c-2-.8-3.500-2.300-4.300-4l1.400-1.700-1.300-3Z" fill="#fff" />
        </>
      ),
    },
    {
      name: "Tor Browser",
      icon: (
        <>
          <circle cx="16" cy="15.5" r="14.5" fill="#6a16a8" /><path d="M16 1a14.500 14.500 0 0 1 0 29Z" fill="#420a6e" />
          <path d="M16 5.500a10 10 0 0 1 0 20M16 9.500a6 6 0 0 1 0 12M16 13.500a2 2 0 0 1 0 4" stroke="#d7b4f5" strokeWidth="2" />
        </>
      ),
    },
    {
      name: "File Explorer",
      icon: (
        <>
          <path d="M1 4.500A1.500 1.500 0 0 1 2.500 3h8l3 3.500H28A1.500 1.500 0 0 1 29.500 8v6H1Z" fill="#e5a00d" /><rect x="1" y="7.5" width="29" height="21" rx="1.5" fill="#ffcf48" />
          <path d="M5 28.500v-5A2.500 2.500 0 0 1 7.500 21h16a2.500 2.500 0 0 1 2.500 2.500v5Z" fill="#1479cf" /><path d="M10 25h11" stroke="#0b4f92" strokeWidth="1.5" />
        </>
      ),
    },
    {
      name: "Lambda",
      dot: true,
      icon: (
        <>
          <rect x="1" y="0" width="29" height="30" fill="#7ba31c" /><path d="M4 5h14M4 10h23M4 15h23M4 20h23M4 25h23" stroke="#b9d676" strokeWidth="1.5" />
          <path d="M10 6h3l8 18h3M15.500 12 10 25" stroke="#26300f" strokeWidth="2.4" />
          <rect x="19" y="-6" width="17" height="19" fill="#8fb92a" stroke="#52700f" /><path d="M23-2.500h2l5 12.500h2M27 2l-4 8" stroke="#26300f" strokeWidth="1.6" />
        </>
      ),
    },
    { name: "Adobe XD", active: true, icon: <rect x="1" y="0" width="30" height="31" rx="4" fill="#470137" /> },
  ];
  return (
    <footer className="grid h-[60px] shrink-0 grid-cols-[1fr_auto_1fr] items-center bg-[#202020] text-sm text-white">
      <div className="flex items-center gap-[11px] pl-7">
        <span className="size-[26px] rounded-full bg-gradient-to-br from-[#ffd500] to-[#e85d04]" />
        <span className="flex flex-col leading-5">
          <span>97°F</span>
          <span className="text-[#b5b5b5]">Sunny</span>
        </span>
      </div>
      <nav className="flex gap-[7px]">
        {apps.map((a) => (
          <button key={a.name} type="button" aria-label={a.name} className={`relative flex h-[50px] w-12 items-center justify-center rounded ${a.active ? "border border-[#383838] bg-[#2d2d2d]" : ""}`}>
            <svg width="31" height="31" viewBox="0 0 32 32" fill="none" className="overflow-visible" aria-hidden="true">{a.icon}</svg>
            {a.active && <span className="absolute text-[17px] font-bold text-[#f07cf0]">Xd</span>}
            {a.dot && <span className="absolute bottom-0 h-1 w-2 rounded-full bg-[#9a9a9a]" />}
            {a.active && <span className="absolute bottom-0 h-1 w-5 rounded-full bg-[#4cc2ff]" />}
          </button>
        ))}
      </nav>
      <div className="flex items-center justify-end pr-[25px]">
        <Icon w={16} h={9}><path d="m.7 8 7.300-7 7.300 7" stroke="#fff" strokeWidth="1.2" /></Icon>
        <Icon w={21} h={14} className="ml-3">
          <path d="M5 5.500a5.500 5.500 0 0 1 10.500-1l-6 5Z" fill="#a5a5a5" /><circle cx="4.5" cy="9" r="4.3" fill="#c4c4c4" />
          <path d="M2 12c2-3 6-4.500 8.500-5.500 2-2.500 6-2 6.500 1 5 0 4.500 6 1 6H5C3.500 13.500 2.500 13 2 12Z" fill="#fff" />
        </Icon>
        <span className="ml-[18px]">ENG</span>
        <Icon w={20} h={15} className="ml-[22px]">
          <path d="M.7 5.500a13.200 13.200 0 0 1 18.600 0M3.500 8.300a9.200 9.200 0 0 1 13 0M6.300 11a5.200 5.200 0 0 1 7.400 0" stroke="#fff" strokeWidth="1.4" /><circle cx="10" cy="13" r="1.7" fill="#fff" />
        </Icon>
        <Icon w={20} h={17} className="ml-2.5">
          <path d="M.7 6h3l5-4.500v14l-5-4.500h-3ZM11.500 6a4 4 0 0 1 0 5M14 3.500a7.500 7.500 0 0 1 0 10M16.500 1.500a10.500 10.500 0 0 1 0 14" stroke="#fff" strokeWidth="1.3" strokeLinejoin="round" />
        </Icon>
        <Icon w={20} h={17} className="ml-2.5">
          <path d="M9 4h7a1.500 1.500 0 0 1 1.500 1.500v8A1.500 1.500 0 0 1 16 15H7a1.500 1.500 0 0 1-1.500-1.500" stroke="#fff" strokeWidth="1.4" />
          <path d="M18.500 7.500h1.500v4h-1.500ZM7.500 6.500h2V13h-2ZM0 3.500h7.500v3.500L5 9.500V15H2.800V9.500L0 7ZM1.500.5H3v3H1.500ZM4.700.5h1.500v3H4.700Z" fill="#fff" />
        </Icon>
        <span className="ml-[22px] flex flex-col text-right leading-5">
          <span>2:23 PM</span>
          <span>6/23/2022</span>
        </span>
        <span className="ml-2.5 flex size-5 items-center justify-center rounded-full bg-[#4cc2ff] text-xs text-black">3</span>
      </div>
    </footer>
  );
}

export default function App() {
  return (
    <div className="flex h-screen flex-col overflow-hidden font-['Noto_Sans',sans-serif]">
      <TitleBar />
      <Toolbar />
      <div className="flex min-h-0 flex-1">
        <ToolStrip />
        <LayersPanel />
        <Canvas />
        <Inspector />
      </div>
      <Taskbar />
    </div>
  );
}
